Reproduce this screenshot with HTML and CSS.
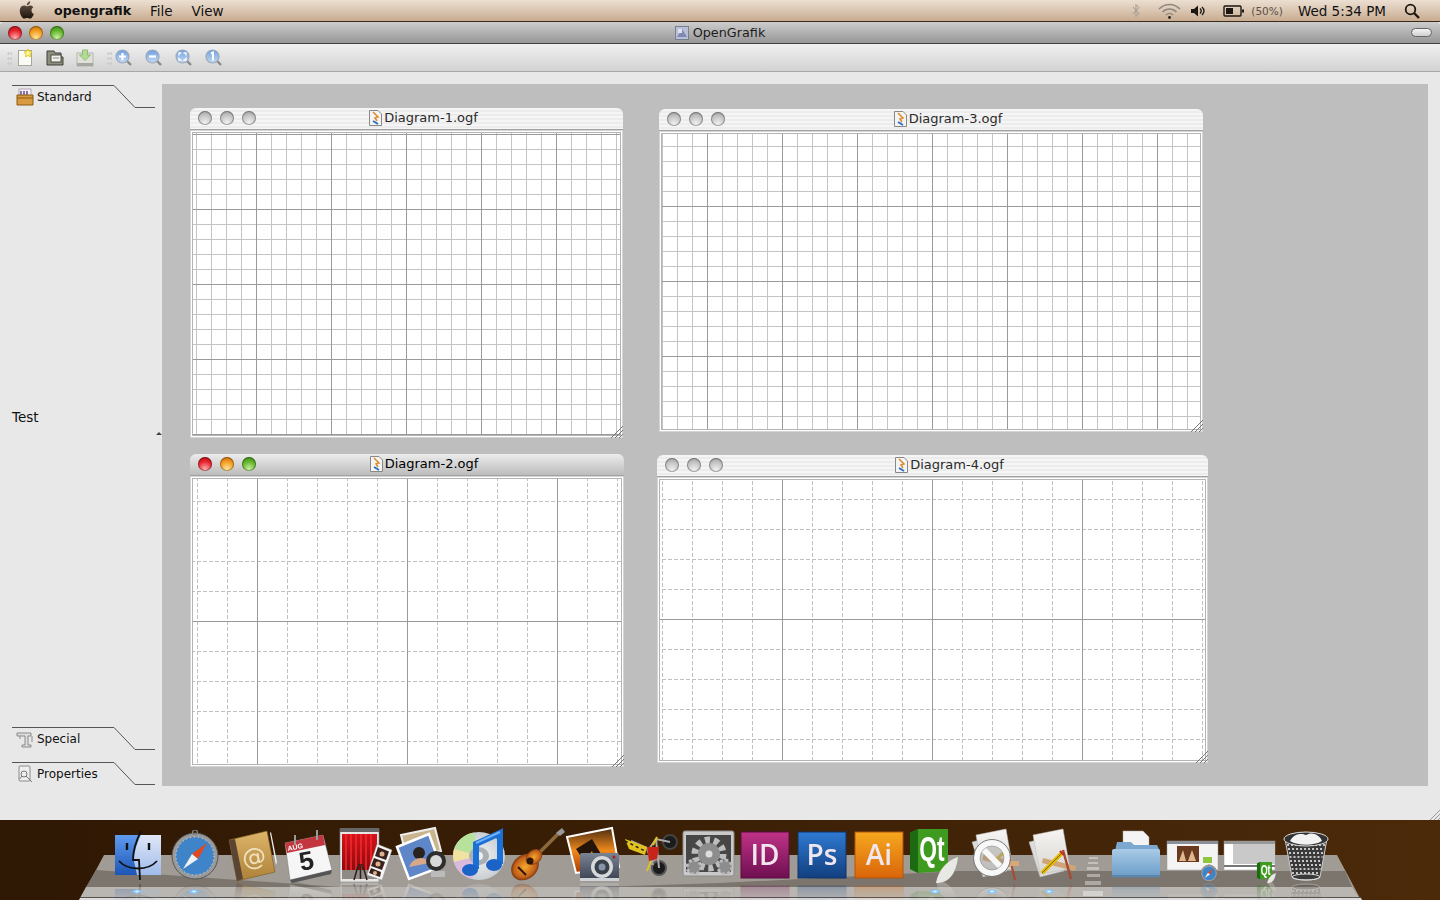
FILE: index.html
```html
<!DOCTYPE html>
<html lang="en">
  <head>
    <meta charset="UTF-8" />
    <title>OpenGrafik</title>
    <link rel="stylesheet" href="styles.css">
  </head>

  <body>
    <!-- Shared gradients and repeated drawings -->
    <svg class="defs" width="0" height="0">
      <defs>
        <linearGradient id="apple" x1="0" y1="0" x2="0" y2="1"><stop offset="0" stop-color="#6b5a4a"/><stop offset="1" stop-color="#1d130c"/></linearGradient>
        <linearGradient id="finderL" x1="0" y1="0" x2="0" y2="1"><stop offset="0" stop-color="#5f9cf0"/><stop offset="1" stop-color="#1c55b5"/></linearGradient>
        <linearGradient id="finderR" x1="0" y1="0" x2="0" y2="1"><stop offset="0" stop-color="#dfe7f6"/><stop offset="1" stop-color="#9fbbea"/></linearGradient>
        <linearGradient id="book" x1="0" y1="0" x2="0" y2="1"><stop offset="0" stop-color="#dcb46a"/><stop offset="1" stop-color="#ad8238"/></linearGradient>
        <linearGradient id="curtain" x1="0" y1="0" x2="0" y2="1"><stop offset="0" stop-color="#d81218"/><stop offset="1" stop-color="#8c0a0e"/></linearGradient>
        <linearGradient id="sunset" x1="0" y1="0" x2="0" y2="1"><stop offset="0" stop-color="#4b2a10"/><stop offset=".5" stop-color="#ee8a1c"/><stop offset="1" stop-color="#a83c08"/></linearGradient>
        <linearGradient id="cam" x1="0" y1="0" x2="0" y2="1"><stop offset="0" stop-color="#7b8494"/><stop offset="1" stop-color="#3c4352"/></linearGradient>
        <linearGradient id="indesign" x1="0" y1="0" x2="0" y2="1"><stop offset="0" stop-color="#bf3387"/><stop offset="1" stop-color="#6f0f50"/></linearGradient>
        <linearGradient id="photoshop" x1="0" y1="0" x2="0" y2="1"><stop offset="0" stop-color="#2f7ad2"/><stop offset="1" stop-color="#123f7f"/></linearGradient>
        <linearGradient id="illustrator" x1="0" y1="0" x2="0" y2="1"><stop offset="0" stop-color="#f6a81f"/><stop offset="1" stop-color="#d9650a"/></linearGradient>
        <linearGradient id="folder" x1="0" y1="0" x2="0" y2="1"><stop offset="0" stop-color="#a9cbe8"/><stop offset="1" stop-color="#6a9cc6"/></linearGradient>
        <linearGradient id="lens" x1="0" y1="0" x2="0" y2="1"><stop offset="0" stop-color="#6f9fe0"/><stop offset="1" stop-color="#c4daf4"/></linearGradient>
        <linearGradient id="page" x1="0" y1="0" x2="0" y2="1"><stop offset="0" stop-color="#f6f5f3"/><stop offset="1" stop-color="#d6d5d1"/></linearGradient>
        <radialGradient id="cd" cx=".5" cy=".5" r=".5"><stop offset="0" stop-color="#f2f4f6"/><stop offset="1" stop-color="#c9ced2"/></radialGradient>
        <radialGradient id="sunburst" cx=".5" cy=".5" r=".55"><stop offset="0" stop-color="#f2a82c"/><stop offset=".7" stop-color="#c4611a"/><stop offset="1" stop-color="#5e2a0a"/></radialGradient>
        <symbol id="safari" viewBox="0 0 50 50">
          <circle cx="25" cy="26" r="23" fill="#9a9a9a" stroke="#555"/>
          <circle cx="25" cy="26" r="19" fill="#3f83c9"/>
          <circle cx="25" cy="26" r="19" fill="none" stroke="#dfe9f3" stroke-width="1" stroke-dasharray="1 3"/>
          <path d="M37 13 L22 24 L28 29Z" fill="#e2491f"/>
          <path d="M13 39 L22 24 L28 29Z" fill="#f1f1f1"/>
          <circle cx="25" cy="2.500" r="2.500" fill="none" stroke="#888" stroke-width="1.200"/>
        </symbol>
        <symbol id="qt" viewBox="0 0 50 56">
          <path d="M2 4 L10 0 H40 V42 L10 44 L2 40Z" fill="#3f9a20"/>
          <path d="M2 4 L10 0 V44 L2 40Z" fill="#1c6a12"/>
          <text class="dock-qt" transform="translate(24 32) scale(.76 1.200)">Qt</text>
          <path d="M50 28 C38 32 30 42 28 54 C42 54 48 44 50 28Z" fill="#e8e8e4"/>
        </symbol>
        <symbol id="page-tools" viewBox="0 0 57 56">
          <path d="M7 15 L30 9 L42 44 L18 50Z" fill="#ddd" stroke="#aaa" stroke-width=".5"/>
          <path d="M11 8 L41 2 L48 42 L18 47Z" fill="url(#page)" stroke="#bbb" stroke-width=".5"/>
        </symbol>
      </defs>
    </svg>

    <!-- Menu bar -->
    <div class="menubar">
      <div class="menu-left">
        <svg class="apple" viewBox="0 0 24 24"><path fill="url(#apple)" d="M17.05 12.04c-.03-2.76 2.25-4.08 2.35-4.15-1.28-1.87-3.27-2.13-3.98-2.16-1.69-.17-3.3 1-4.16 1-.86 0-2.18-.97-3.59-.95-1.85.03-3.55 1.07-4.5 2.73-1.92 3.33-.49 8.26 1.38 10.96.91 1.32 2 2.81 3.43 2.75 1.38-.05 1.9-.89 3.56-.89 1.66 0 2.13.89 3.59.86 1.48-.02 2.42-1.35 3.33-2.67 1.05-1.53 1.48-3.02 1.5-3.09-.03-.01-2.88-1.1-2.91-4.39zM14.32 3.92c.76-.92 1.27-2.2 1.13-3.47-1.09.04-2.42.73-3.2 1.64-.7.81-1.32 2.12-1.15 3.37 1.22.09 2.46-.62 3.22-1.54z"/></svg>
        <span class="app-name">opengrafik</span>
        <span class="menu-item">File</span>
        <span class="menu-item">View</span>
      </div>
      <div class="menu-right">
        <svg class="status bt" width="8" height="15" viewBox="0 0 8 15"><path d="M1 4 L7 10.500 L4 13.500 V1.500 L7 4.500 L1 11" fill="none" stroke="#a39a90" stroke-width="1"/></svg>
        <svg class="status wifi" width="23" height="16" viewBox="0 0 23 16"><g fill="none" stroke="#8f8880" stroke-width="1.600"><path d="M1 6 C7 0 16 0 22 6"/><path d="M4.500 9 C8.500 5 14.500 5 18.500 9"/><path d="M8 12 C10 10 13 10 15 12"/></g><circle cx="11.500" cy="14.500" r="1.400" fill="#2b2118"/></svg>
        <svg class="status vol" width="15" height="12" viewBox="0 0 15 12"><path d="M0 4 H3 L7 0.500 V11.500 L3 8 H0Z" fill="#1d1712"/><path d="M9 3.500 C10.500 5 10.500 7 9 8.500 M11 2 C13.500 4.500 13.500 7.500 11 10" fill="none" stroke="#1d1712" stroke-width="1.300"/></svg>
        <svg class="status batt" width="22" height="12" viewBox="0 0 22 12"><rect x="1" y="1" width="17" height="10" rx="1" fill="none" stroke="#1d1712" stroke-width="1.400"/><rect x="3" y="3" width="7" height="6" fill="#1d1712"/><rect x="19" y="4.500" width="2" height="3" fill="#1d1712"/></svg>
        <span class="batt-pct">(50%)</span>
        <span class="clock">Wed 5:34 PM</span>
        <svg class="status search" width="16" height="16" viewBox="0 0 16 16"><circle cx="6.500" cy="6.500" r="4.800" fill="none" stroke="#1d1712" stroke-width="1.800"/><path d="M10 10 L15 15" stroke="#1d1712" stroke-width="2.400"/></svg>
      </div>
    </div>

    <!-- Application window -->
    <div class="titlebar">
      <div class="lights main-lights">
        <span class="light red"></span>
        <span class="light amber"></span>
        <span class="light green"></span>
      </div>
      <div class="app-title">
        <svg width="14" height="14" viewBox="0 0 14 14"><rect x=".5" y=".5" width="13" height="13" fill="#b9bfd6" stroke="#77808f"/><path d="M2 11 L7 3 L12 11Z" fill="#7f88b0"/><rect x="3" y="3" width="4" height="4" fill="#dfe3f0"/></svg>
        <span>OpenGrafik</span>
      </div>
      <span class="pill"></span>
    </div>

    <div class="toolbar">
      <span class="handle"></span>
      <span class="tool handle-after">
        <svg width="20" height="20" viewBox="0 0 20 20"><rect x="3.500" y="2.500" width="13" height="15" fill="#fbfbf6" stroke="#a8a89a"/><path d="M13 1 L14.200 3.600 L17 4 L15 6 L15.500 8.800 L13 7.500 L10.500 8.800 L11 6 L9 4 L11.800 3.600Z" fill="#fff6a0" stroke="#e8cc10"/></svg>
      </span>
      <span class="tool">
        <svg width="18" height="18" viewBox="0 0 18 18"><path d="M1 2 H8 L9 4 H15 V8 H17 V16 H1Z" fill="#8b8f7c" stroke="#3f4238"/><rect x="5" y="6" width="10" height="7" fill="#f2f2ec" stroke="#4a4d42"/><path d="M7 9 H13" stroke="#888"/></svg>
      </span>
      <span class="tool">
        <svg width="18" height="18" viewBox="0 0 18 18"><rect x="1" y="4" width="16" height="13" fill="#e0e2da" stroke="#b4b8b0"/><rect x="1" y="14" width="16" height="3" fill="#a4a7a0"/><path d="M6.500 1 H11.500 V6 H14.500 L9 11.500 L3.500 6 H6.500Z" fill="#b4da98" stroke="#92be74"/></svg>
      </span>
      <span class="handle second"></span>
      <span class="tool">
        <svg class="mag" viewBox="0 0 18 18"><path d="M11.500 11.500 L16 16" stroke="#8a8a8a" stroke-width="2.400"/><circle cx="7.500" cy="7.500" r="6.500" fill="url(#lens)" stroke="#9aa8ba" stroke-width="1.200"/><path d="M7.500 4 V11 M4 7.500 H11" stroke="#fff" stroke-width="2.200"/></svg>
      </span>
      <span class="tool">
        <svg class="mag" viewBox="0 0 18 18"><path d="M11.500 11.500 L16 16" stroke="#8a8a8a" stroke-width="2.400"/><circle cx="7.500" cy="7.500" r="6.500" fill="url(#lens)" stroke="#9aa8ba" stroke-width="1.200"/><path d="M4 7.500 H11" stroke="#fff" stroke-width="2.200"/></svg>
      </span>
      <span class="tool">
        <svg class="mag" viewBox="0 0 18 18"><path d="M11.500 11.500 L16 16" stroke="#8a8a8a" stroke-width="2.400"/><circle cx="7.500" cy="7.500" r="6.500" fill="url(#lens)" stroke="#9aa8ba" stroke-width="1.200"/><path d="M4 6.500 V4 H6.500 M8.500 4 H11 V6.500 M11 8.500 V11 H8.500 M6.500 11 H4 V8.500" fill="none" stroke="#fff" stroke-width="1.300"/></svg>
      </span>
      <span class="tool">
        <svg class="mag" viewBox="0 0 18 18"><path d="M11.500 11.500 L16 16" stroke="#8a8a8a" stroke-width="2.400"/><circle cx="7.500" cy="7.500" r="6.500" fill="url(#lens)" stroke="#9aa8ba" stroke-width="1.200"/><path d="M6 4.500 L8 3.500 V11.500" fill="none" stroke="#fff" stroke-width="2"/></svg>
      </span>
    </div>

    <div class="workspace">
      <!-- Stencil tabs -->
      <aside class="sidebar">
        <div class="tab">
          <svg class="tab-line" width="144" height="24" viewBox="0 0 144 24"><path d="M0 .5 H102 L123 22.500 H143" fill="none" stroke="#555"/></svg>
          <svg class="tab-icon" width="18" height="18" viewBox="0 0 18 18"><rect x="3" y="1" width="12" height="8" fill="#f4f0f6" stroke="#8a7a9a" stroke-width=".6"/><path d="M5 3 V8 M8 3 V8 M11 3 V8" stroke="#5a3f88" stroke-width="1.400"/><path d="M1 7 H17 V17 H1Z" fill="#d99a3f" stroke="#8a5a14"/><path d="M1 10 H17" stroke="#8a5a14"/></svg>
          <span>Standard</span>
        </div>
        <div class="test-row">
          <span>Test</span>
          <span class="caret"></span>
        </div>
        <div class="tab special">
          <svg class="tab-line" width="144" height="24" viewBox="0 0 144 24"><path d="M0 .5 H102 L123 22.500 H143" fill="none" stroke="#555"/></svg>
          <svg class="tab-icon" width="18" height="18" viewBox="0 0 18 18"><path d="M1 3 H15 V6 H12 V15 H15 V17 H6 V15 H9 V6 H1Z" fill="#dcdcdc" stroke="#8b8b8b"/><path d="M4 6 V9 M16 6 V12" stroke="#8b8b8b"/></svg>
          <span>Special</span>
        </div>
        <div class="tab">
          <svg class="tab-line" width="144" height="24" viewBox="0 0 144 24"><path d="M0 .5 H102 L123 22.500 H143" fill="none" stroke="#555"/></svg>
          <svg class="tab-icon" width="18" height="18" viewBox="0 0 18 18"><rect x="3" y="1" width="11" height="15" rx="1" fill="#eee" stroke="#8b8b8b"/><circle cx="8" cy="9" r="3" fill="none" stroke="#777"/><path d="M6 11 L3.500 14 M10 11 L16 17" stroke="#777"/></svg>
          <span>Properties</span>
        </div>
      </aside>

      <main class="mdi">
        <section class="win win-1">
          <header class="win-title">
            <div class="lights">
              <span class="light off"></span>
              <span class="light off"></span>
              <span class="light off"></span>
            </div>
            <div class="win-name">
              <svg class="doc-icon" width="13" height="16" viewBox="0 0 13 16"><path d="M.5 .5 H9 L12.500 4 V15.500 H.5Z" fill="#f4f4f4" stroke="#888"/><path d="M4 2 L9 7 L6 8 L8 11" fill="none" stroke="#e08a2a" stroke-width="1.500"/><path d="M4 11 L9 14" stroke="#2f6fc0" stroke-width="2"/></svg>
              <span>Diagram-1.ogf</span>
            </div>
          </header>
          <div class="win-body">
            <svg class="grid" width="100%" height="100%">
              <defs>
                <pattern id="grid-1" width="75" height="75" x="63" y="1" patternUnits="userSpaceOnUse">
                  <path class="minor" d="M15.500 0 V75 M30.500 0 V75 M45.500 0 V75 M60.500 0 V75 M0 15.500 H75 M0 30.500 H75 M0 45.500 H75 M0 60.500 H75"/>
                  <path class="major" d="M.5 0 V75 M0 .5 H75"/>
                </pattern>
              </defs>
              <rect width="100%" height="100%" fill="url(#grid-1)"/>
            </svg>
            <svg class="grip" width="12" height="12" viewBox="0 0 12 12"><path d="M0 12 L12 0 M4 12 L12 4 M8 12 L12 8" stroke="#777"/></svg>
          </div>
        </section>

        <section class="win win-3">
          <header class="win-title">
            <div class="lights">
              <span class="light off"></span>
              <span class="light off"></span>
              <span class="light off"></span>
            </div>
            <div class="win-name">
              <svg class="doc-icon" width="13" height="16" viewBox="0 0 13 16"><path d="M.5 .5 H9 L12.500 4 V15.500 H.5Z" fill="#f4f4f4" stroke="#888"/><path d="M4 2 L9 7 L6 8 L8 11" fill="none" stroke="#e08a2a" stroke-width="1.500"/><path d="M4 11 L9 14" stroke="#2f6fc0" stroke-width="2"/></svg>
              <span>Diagram-3.ogf</span>
            </div>
          </header>
          <div class="win-body">
            <svg class="grid" width="100%" height="100%">
              <defs>
                <pattern id="grid-3" width="75" height="75" x="45" y="72" patternUnits="userSpaceOnUse">
                  <path class="minor" d="M15.500 0 V75 M30.500 0 V75 M45.500 0 V75 M60.500 0 V75 M0 15.500 H75 M0 30.500 H75 M0 45.500 H75 M0 60.500 H75"/>
                  <path class="major" d="M.5 0 V75 M0 .5 H75"/>
                </pattern>
              </defs>
              <rect width="100%" height="100%" fill="url(#grid-3)"/>
            </svg>
            <svg class="grip" width="12" height="12" viewBox="0 0 12 12"><path d="M0 12 L12 0 M4 12 L12 4 M8 12 L12 8" stroke="#777"/></svg>
          </div>
        </section>

        <section class="win win-2 active">
          <header class="win-title">
            <div class="lights">
              <span class="light red"></span>
              <span class="light amber"></span>
              <span class="light green"></span>
            </div>
            <div class="win-name">
              <svg class="doc-icon" width="13" height="16" viewBox="0 0 13 16"><path d="M.5 .5 H9 L12.500 4 V15.500 H.5Z" fill="#f4f4f4" stroke="#888"/><path d="M4 2 L9 7 L6 8 L8 11" fill="none" stroke="#e08a2a" stroke-width="1.500"/><path d="M4 11 L9 14" stroke="#2f6fc0" stroke-width="2"/></svg>
              <span>Diagram-2.ogf</span>
            </div>
          </header>
          <div class="win-body">
            <svg class="grid" width="100%" height="100%">
              <defs>
                <pattern id="grid-2" width="150" height="150" x="64" y="142" patternUnits="userSpaceOnUse">
                  <path class="dashed" d="M30.500 0 V150 M60.500 0 V150 M90.500 0 V150 M120.500 0 V150 M0 30.500 H150 M0 60.500 H150 M0 90.500 H150 M0 120.500 H150"/>
                  <path class="major" d="M.5 0 V150 M0 .5 H150"/>
                </pattern>
              </defs>
              <rect width="100%" height="100%" fill="url(#grid-2)"/>
            </svg>
            <svg class="grip" width="12" height="12" viewBox="0 0 12 12"><path d="M0 12 L12 0 M4 12 L12 4 M8 12 L12 8" stroke="#777"/></svg>
          </div>
        </section>

        <section class="win win-4">
          <header class="win-title">
            <div class="lights">
              <span class="light off"></span>
              <span class="light off"></span>
              <span class="light off"></span>
            </div>
            <div class="win-name">
              <svg class="doc-icon" width="13" height="16" viewBox="0 0 13 16"><path d="M.5 .5 H9 L12.500 4 V15.500 H.5Z" fill="#f4f4f4" stroke="#888"/><path d="M4 2 L9 7 L6 8 L8 11" fill="none" stroke="#e08a2a" stroke-width="1.500"/><path d="M4 11 L9 14" stroke="#2f6fc0" stroke-width="2"/></svg>
              <span>Diagram-4.ogf</span>
            </div>
          </header>
          <div class="win-body">
            <svg class="grid" width="100%" height="100%">
              <defs>
                <pattern id="grid-4" width="150" height="150" x="122" y="139" patternUnits="userSpaceOnUse">
                  <path class="dashed" d="M30.500 0 V150 M60.500 0 V150 M90.500 0 V150 M120.500 0 V150 M0 30.500 H150 M0 60.500 H150 M0 90.500 H150 M0 120.500 H150"/>
                  <path class="major" d="M.5 0 V150 M0 .5 H150"/>
                </pattern>
              </defs>
              <rect width="100%" height="100%" fill="url(#grid-4)"/>
            </svg>
            <svg class="grip" width="12" height="12" viewBox="0 0 12 12"><path d="M0 12 L12 0 M4 12 L12 4 M8 12 L12 8" stroke="#777"/></svg>
          </div>
        </section>
      </main>

      <svg class="main-grip" width="10" height="10" viewBox="0 0 10 10"><path d="M0 10 L10 0 M4 10 L10 4 M8 10 L10 8" stroke="#999"/></svg>
    </div>

    <!-- Dock -->
    <footer class="dock">
      <svg class="shelf" width="1440" height="80" viewBox="0 0 1440 80">
        <polygon points="104,35 1337,35 1361,80 80,80" fill="#a09b94"/>
        <polygon points="96,50 340,67 600,67 720,63 960,51 1345,51 1352,67 86,67" fill="#7c756d"/>
        <polygon points="86,67 1352,67 1359,78 80,78" fill="#b9b6b1"/>
        <rect x="80" y="77" width="1281" height="1" fill="#56524d"/>
        <polygon points="80,78 1361,78 1362,80 79,80" fill="#dcdcdc"/>
      </svg>
      <div class="dock-items">
        <div class="dock-item"><svg viewBox="0 0 57 56"><rect x="5" y="8" width="46" height="40" fill="url(#finderR)"/><path d="M5 8 H31 C26 18 24 26 24 34 L27 48 H5Z" fill="url(#finderL)"/><path d="M31 4 C25 16 23 26 23 33 H29 L30 53 M9 34 C18 44 38 44 47 34" fill="none" stroke="#111" stroke-width="1.800"/><path d="M17 16 V23 M39 16 V23" stroke="#111" stroke-width="2.400"/></svg></div>
        <div class="dock-item"><svg viewBox="0 0 57 56"><use href="#safari" x="3" y="3" width="50" height="50"/></svg></div>
        <div class="dock-item"><svg viewBox="0 0 57 56"><path d="M5 13 L43 4 L51 45 L13 54Z" fill="url(#book)" stroke="#7a5a20" stroke-width=".6"/><path d="M5 13 L11 12 L19 52 L13 54Z" fill="#5a4434"/><text x="30" y="38" class="dock-at" transform="rotate(-11 30 30)">@</text><path d="M46 6 L47 5 L53 35 L52 38Z" fill="#eee"/></svg></div>
        <div class="dock-item"><svg viewBox="0 0 57 56"><path d="M4 16 L42 8 L51 43 L9 53Z" fill="#f6f6f6" stroke="#777" stroke-width=".5"/><path d="M4 16 L42 8 L44 18 L6 26Z" fill="#c33640"/><text x="7" y="24" class="dock-aug" transform="rotate(-11 7 24)">AUG</text><text x="20" y="44" class="dock-day" transform="rotate(-11 20 44)">5</text><path d="M14 8 V18 M36 3 V13" stroke="#9a9a9a" stroke-width="2"/><path d="M9 53 L51 43 L50 47 L11 56Z" fill="#555"/></svg></div>
        <div class="dock-item"><svg viewBox="0 0 57 56"><rect x="2" y="2" width="39" height="53" fill="#e6e6e6" stroke="#888" stroke-width=".6"/><rect x="2" y="1" width="39" height="4" fill="#666"/><rect x="4" y="7" width="35" height="36" fill="url(#curtain)"/><path d="M8 7 V43 M13 7 V43 M18 7 V43 M23 7 V43 M28 7 V43 M33 7 V43" stroke="#ee2a30" stroke-width="1.600"/><rect x="4" y="43" width="35" height="9" fill="#8f8a86"/><path d="M20 38 H25 M20 39 L16 53 M25 39 L29 53 M22.500 39 V52" stroke="#2e211c" stroke-width="1.500"/><path d="M39 17 L54 23 L44 53 L29 48Z" fill="#f5f5f5" stroke="#999" stroke-width=".4"/><path d="M40 20 L51 24.500 L48 33 L37 29Z M36 31 L47 35 L44 43 L33 39Z M33 41 L43 45 L42 50 L31 46Z" fill="#3a221c"/><circle cx="44" cy="27" r="2.500" fill="#dcae92"/><circle cx="40" cy="37" r="2.500" fill="#dcae92"/><circle cx="37" cy="46" r="2" fill="#dcae92"/></svg></div>
        <div class="dock-item"><svg viewBox="0 0 57 56"><path d="M6 8 L40 1 L46 24 L12 32Z" fill="#c9b68e" stroke="#eee" stroke-width="2"/><path d="M2 20 L34 7 L46 40 L14 52Z" fill="#5f86c8" stroke="#fff" stroke-width="2.500"/><circle cx="24" cy="26" r="6" fill="#2a2320"/><path d="M14 40 C18 30 30 28 34 36Z" fill="#d8a888"/><circle cx="41" cy="34" r="10" fill="#2d2d2d"/><circle cx="41" cy="34" r="6" fill="#d8d8d8"/><path d="M36 44 H50 V50 H36Z" fill="#bbb"/></svg></div>
        <div class="dock-item"><svg viewBox="0 0 57 56"><ellipse cx="27" cy="29" rx="26" ry="24" fill="url(#cd)"/><path d="M27 29 L2 22 A26 24 0 0 1 22 5.500Z" fill="#b8e29c"/><path d="M27 29 L2 22 A26 24 0 0 0 2 35Z" fill="#f0e2a0"/><path d="M27 29 L2 35 A26 24 0 0 0 20 52Z" fill="#d9b9dc"/><ellipse cx="27" cy="29" rx="10" ry="9" fill="#aab0b4"/><ellipse cx="27" cy="29" rx="4" ry="4" fill="#eef0f2"/><path d="M24 42 V17 L48 6 V37" fill="none" stroke="#1b6fd8" stroke-width="6"/><path d="M24 16 L48 5" stroke="#6fb2f4" stroke-width="2"/><ellipse cx="18" cy="43" rx="8" ry="6" fill="#1c63c8"/><ellipse cx="42" cy="38" rx="8" ry="6" fill="#1c63c8"/></svg></div>
        <div class="dock-item"><svg viewBox="0 0 57 56"><path d="M26 30 L52 4" stroke="#8a6a3c" stroke-width="3.500"/><path d="M47 6 L53 1 L56 5 L51 9Z" fill="#999"/><ellipse cx="16" cy="40" rx="15" ry="12" fill="url(#sunburst)" transform="rotate(-40 16 40)"/><ellipse cx="25" cy="30" rx="9" ry="7" fill="url(#sunburst)" transform="rotate(-40 25 30)"/><circle cx="21" cy="34" r="3.500" fill="#2c1708"/><path d="M9 40 L17 48" stroke="#311" stroke-width="2"/></svg></div>
        <div class="dock-item"><svg viewBox="0 0 57 56"><path d="M1 10 L46 1 L53 40 L10 46Z" fill="url(#sunset)" stroke="#fff" stroke-width="2"/><path d="M10 22 L26 12 L38 32 L30 34 L26 24 L18 34Z" fill="#25140a"/><rect x="14" y="26" width="39" height="27" rx="2" fill="url(#cam)"/><rect x="14" y="51" width="39" height="3" fill="#cfd3d8"/><circle cx="36" cy="40" r="11" fill="#d6d8dc"/><circle cx="36" cy="40" r="7.500" fill="#3a4048"/><circle cx="36" cy="40" r="3.500" fill="#8793a6"/><circle cx="48" cy="30" r="1.500" fill="#a22"/></svg></div>
        <div class="dock-item"><svg viewBox="0 0 57 56"><circle cx="47" cy="15" r="7" fill="#1b1b1b" stroke="#444" stroke-width="2"/><circle cx="36" cy="41" r="7" fill="#1b1b1b" stroke="#555" stroke-width="2"/><path d="M8 14 L26 22 L33 12 L47 15 M33 12 L36 41 M24 22 L30 38" fill="none" stroke="#aaa" stroke-width="2"/><path d="M2 12 L24 20 L22 28 L6 22Z" fill="#e3c21c"/><path d="M2 14 L22 24" stroke="#222" stroke-width="1.500" stroke-dasharray="3 3"/><path d="M24 20 L36 20 L34 32 L26 34Z" fill="#c8241a"/><path d="M30 18 L34 10 M28 34 L24 44" stroke="#e3c21c" stroke-width="2"/></svg></div>
        <div class="dock-item"><svg viewBox="0 0 57 56"><rect x="3" y="4" width="51" height="45" rx="2" fill="#c9c9c9" stroke="#8a8a8a"/><rect x="6" y="8" width="45" height="37" fill="#464646"/><circle cx="29" cy="27" r="14" fill="none" stroke="#bdbdbd" stroke-width="7" stroke-dasharray="5 3.790"/><circle cx="29" cy="27" r="11" fill="#8d8d8d"/><circle cx="29" cy="27" r="3.500" fill="#ddd"/><circle cx="14" cy="40" r="7" fill="#8d8d8d" stroke="#bdbdbd" stroke-width="3" stroke-dasharray="3 2.500"/><circle cx="45" cy="40" r="7" fill="#8d8d8d" stroke="#bdbdbd" stroke-width="3" stroke-dasharray="3 2.500"/></svg></div>
        <div class="dock-item"><svg viewBox="0 0 57 56"><rect x="4" y="5" width="48" height="46" fill="url(#indesign)" stroke="#5a0c40"/><text x="28" y="38" class="dock-adobe">ID</text></svg></div>
        <div class="dock-item"><svg viewBox="0 0 57 56"><rect x="4" y="5" width="48" height="46" fill="url(#photoshop)" stroke="#0e3468"/><text x="28" y="38" class="dock-adobe">Ps</text></svg></div>
        <div class="dock-item"><svg viewBox="0 0 57 56"><rect x="4" y="5" width="48" height="46" fill="url(#illustrator)" stroke="#b35408"/><text x="28" y="38" class="dock-adobe">Ai</text></svg></div>
        <div class="dock-item"><svg viewBox="0 0 57 56"><use href="#qt" x="0" y="2" width="50" height="56"/></svg></div>
        <div class="dock-item"><svg viewBox="0 0 57 56"><use href="#page-tools" width="57" height="56"/><path d="M18 30 L46 37" stroke="#c9a070" stroke-width="6"/><path d="M30 34 L42 22" stroke="#d9b020" stroke-width="3"/><path d="M44 28 L50 53" stroke="#a8482c" stroke-width="2"/><rect x="44" y="34" width="10" height="5" fill="#d7a878"/><circle cx="27" cy="31" r="15" fill="rgba(150,150,150,.4)" stroke="#f8f8f8" stroke-width="6"/><path d="M16 20 L38 42" stroke="#f8f8f8" stroke-width="6"/><circle cx="27" cy="31" r="18.500" fill="none" stroke="#7c7c7c"/><circle cx="27" cy="31" r="12" fill="none" stroke="#8c8c8c" stroke-width=".6"/></svg></div>
        <div class="dock-item"><svg viewBox="0 0 57 56"><use href="#page-tools" width="57" height="56"/><path d="M21 31 L54 39 L53 44 L20 36Z" fill="#cfa578"/><path d="M41 23 L49 52" stroke="#a8482c" stroke-width="2.400"/><path d="M20 46 L40 26" stroke="#e6b800" stroke-width="4"/><path d="M20 46 L40 26" stroke="#333" stroke-width=".6"/><path d="M38 24 L42 28" stroke="#c03020" stroke-width="2"/></svg></div>
        <div class="dock-sep"><span></span><span></span><span></span><span></span><span></span><span></span></div>
        <div class="dock-item"><svg viewBox="0 0 57 56"><path d="M16 4 H36 L42 10 V22 H16Z" fill="#f4f4f4" stroke="#aaa" stroke-width=".5"/><path d="M8 24 L10 15 H24 L27 18 H50 L53 24Z" fill="#7ca8cf"/><rect x="5" y="22" width="48" height="28" rx="2" fill="url(#folder)"/><rect x="5" y="48" width="48" height="2.500" fill="#5b86aa"/></svg></div>
        <div class="dock-item"><svg viewBox="0 0 57 56"><rect x="3" y="14" width="51" height="29" fill="#f4f4f4" stroke="#999" stroke-width=".5"/><rect x="3" y="14" width="51" height="3" fill="#8a8f9a"/><rect x="13" y="19" width="22" height="16" fill="#6b3a1e"/><path d="M15 34 L19 23 L22 34 M24 34 L28 23 L32 34" fill="#e0b890"/><rect x="39" y="30" width="9" height="6" fill="#8ec63f"/><use href="#safari" x="36" y="37" width="18" height="18"/></svg></div>
        <div class="dock-item"><svg viewBox="0 0 57 56"><rect x="3" y="14" width="51" height="29" fill="#fff" stroke="#999" stroke-width=".5"/><rect x="3" y="14" width="51" height="3" fill="#999"/><rect x="12" y="17" width="42" height="20" fill="#c9c9c9"/><rect x="3" y="38" width="51" height="2" fill="#777"/><use href="#qt" x="35" y="35" width="20" height="22"/></svg></div>
        <div class="dock-item"><svg viewBox="0 0 57 56"><path d="M7 12 L14 50 C18 54 38 54 42 50 L49 12Z" fill="#3a3a3a"/><path d="M7 12 L14 50 C18 54 38 54 42 50 L49 12Z" fill="none" stroke="#cfcfcf" stroke-width="1"/><path d="M9 18 L47 18 M10 22 L46 22 M11 26 L45 26 M11.500 30 L44.500 30 M12 34 L44 34 M13 38 L43 38 M13.500 42 L42.500 42 M14 46 L42 46" stroke="#c6c6c6" stroke-width="1.800" stroke-dasharray="2 2"/><ellipse cx="28" cy="12" rx="22" ry="7" fill="#333" stroke="#ddd"/><path d="M12 14 C16 6 24 6 28 8 C34 4 42 8 44 14 C36 19 20 19 12 14Z" fill="#f2f2f2"/><ellipse cx="28" cy="50" rx="14" ry="3" fill="none" stroke="#dcdcdc"/></svg></div>
      </div>
      <div class="dots">
        <span class="dot dot-finder"></span>
        <span class="dot dot-safari"></span>
        <span class="dot dot-qt"></span>
        <span class="dot dot-a"></span>
        <span class="dot dot-b"></span>
      </div>
    </footer>
  </body>
</html>
```

FILE: styles.css
```css
/* Global Styles */
html,
body {
  margin: 0;
  padding: 0;
  height: 100%;
}

body {
  width: 1440px;
  height: 900px;
  overflow: hidden;
  display: flex;
  flex-direction: column;
  background-color: #e8e8e8;
  font-family: "DejaVu Sans", sans-serif;
  color: #111;
}

.defs {
  position: absolute;
  width: 0;
  height: 0;
}

/* Menu Bar */
.menubar {
  height: 21px;
  flex: none;
  display: flex;
  justify-content: space-between;
  align-items: center;
  background: linear-gradient(#ecdfd1, #dac6b2 50%, #c8ab90);
  border-bottom: 1px solid #3b2a1a;
  font-size: 13.5px;
}

.menu-left {
  display: flex;
  align-items: center;
  padding-left: 18px;
}

.apple {
  width: 19px;
  height: 19px;
  margin-right: 17px;
}

.app-name {
  font-weight: bold;
  font-size: 12.7px;
  width: 77px;
  margin-right: 19px;
}

.menu-item {
  margin-right: 19px;
}

.menu-right {
  display: flex;
  align-items: center;
  padding-right: 20px;
}

.status {
  flex: none;
}

.bt {
  margin-right: 18px;
}

.wifi {
  margin-right: 10px;
}

.vol {
  margin-right: 17px;
}

.batt {
  margin-right: 6px;
}

.batt-pct {
  font-size: 10.5px;
  color: #5a5048;
  margin-right: 15px;
}

.clock {
  margin-right: 18px;
}

/* Application Title Bar */
.titlebar {
  height: 21px;
  flex: none;
  display: grid;
  grid-template-columns: 1fr auto 1fr;
  align-items: center;
  background: linear-gradient(#cdcdcd, #969696);
  border-bottom: 1px solid #3f3f3f;
  border-radius: 4px 4px 0 0;
}

.lights {
  display: flex;
  gap: 8px;
}

.main-lights {
  gap: 7px;
  padding-left: 8px;
}

.light {
  width: 14px;
  height: 14px;
  border-radius: 50%;
  box-shadow: inset 0 0 0 1px rgba(0, 0, 0, 0.3);
}

.light.red {
  background: radial-gradient(circle at 50% 85%, #ffb0b0, #e5222c 55%, #a00a14);
}

.light.amber {
  background: radial-gradient(circle at 50% 85%, #ffe69a, #f29a1e 55%, #b05f0a);
}

.light.green {
  background: radial-gradient(circle at 50% 85%, #c8f2a0, #62b32a 55%, #2f7a10);
}

.light.off {
  background: radial-gradient(circle at 50% 85%, #f2f2f2, #c4c4c4 55%, #8f8f8f);
}

.app-title {
  display: flex;
  align-items: center;
  gap: 4px;
  font-size: 12.8px;
  color: #1c1c1c;
}

.pill {
  justify-self: end;
  width: 19px;
  height: 7px;
  margin-right: 8px;
  border: 1px solid #666;
  border-radius: 5px;
  background: linear-gradient(#f4f4f4, #cfcfcf);
}

/* Toolbar */
.toolbar {
  height: 27px;
  flex: none;
  display: flex;
  align-items: center;
  padding-left: 7px;
  background: linear-gradient(#f0f0f0, #d2d2d2);
  border-bottom: 1px solid #a8a8a8;
}

.handle {
  width: 5px;
  height: 14px;
  margin-right: -2px;
  background-image: radial-gradient(circle, #cdcdcd 1px, transparent 1.5px);
  background-size: 3px 5px;
}

.handle.second {
  margin-left: 7px;
  margin-right: -3px;
}

.tool {
  width: 30px;
  height: 20px;
  display: flex;
  justify-content: center;
  align-items: center;
}

.mag {
  width: 18px;
  height: 18px;
}

/* Workspace */
.workspace {
  flex: 1;
  position: relative;
  display: flex;
  min-height: 0;
}

.main-grip {
  position: absolute;
  right: 0;
  bottom: 0;
}

/* Sidebar */
.sidebar {
  width: 150px;
  flex: none;
  display: flex;
  flex-direction: column;
  padding: 13px 0 34px 12px;
  font-size: 12px;
}

.tab {
  position: relative;
  width: 144px;
  height: 24px;
  flex: none;
  display: flex;
  align-items: center;
  gap: 3px;
  padding-left: 4px;
  box-sizing: border-box;
}

.tab-line {
  position: absolute;
  left: 0;
  top: 0;
}

.tab + .tab {
  margin-top: 11px;
}

.test-row {
  height: 28px;
  margin-top: 300px;
  display: flex;
  justify-content: space-between;
  font-size: 13.5px;
}

.caret {
  align-self: flex-end;
  width: 0;
  height: 0;
  margin-bottom: 2px;
  border-left: 3px solid transparent;
  border-right: 3px solid transparent;
  border-bottom: 3px solid #444;
}

.special {
  margin-top: auto;
}

/* MDI Area */
.mdi {
  position: relative;
  flex: 1;
  margin: 12px 12px 34px 0;
  background-color: #bebebe;
}

.win {
  position: absolute;
  display: flex;
  flex-direction: column;
}

.win-1 {
  left: 28px;
  top: 24px;
  width: 433px;
  height: 330px;
}

.win-3 {
  left: 497px;
  top: 25px;
  width: 544px;
  height: 323px;
}

.win-2 {
  left: 28px;
  top: 370px;
  width: 434px;
  height: 313px;
}

.win-4 {
  left: 495px;
  top: 371px;
  width: 551px;
  height: 308px;
}

.win-title {
  height: 19px;
  flex: none;
  display: flex;
  align-items: center;
  padding: 0 0 2px 8px;
  border-radius: 6px 6px 0 0;
  border-bottom: 1px solid #a2a2a2;
  background: repeating-linear-gradient(#f5f5f5 0, #f5f5f5 2px, #ececec 2px, #ececec 4px);
}

.active .win-title {
  background: linear-gradient(#ececec, #bcbcbc);
}

.win-title .lights {
  width: 58px;
  flex: none;
}

.win-name {
  flex: 1;
  display: flex;
  justify-content: center;
  align-items: center;
  gap: 2px;
  padding-right: 32px;
  font-size: 13px;
  color: #2a2a2a;
}

.active .win-name {
  color: #000;
}

.win-body {
  position: relative;
  flex: 1;
  min-height: 0;
  padding: 1px;
  background-color: #fff;
  border: 1px solid #d4d4d4;
}

.grid {
  display: block;
  box-sizing: border-box;
  border: 1px solid #b4b4b4;
  background-color: #fff;
}

.minor {
  fill: none;
  stroke: #c4c4c4;
}

.dashed {
  fill: none;
  stroke: #c0c0c0;
  stroke-dasharray: 4 2;
}

.major {
  fill: none;
  stroke: #9a9a9a;
}

.grip {
  position: absolute;
  right: -1px;
  bottom: -1px;
}

/* Dock */
.dock {
  position: relative;
  height: 80px;
  flex: none;
  overflow: hidden;
  background: linear-gradient(90deg, #2f1804, #3c2006 50%, #4b2a0a);
}

.shelf {
  position: absolute;
  left: 0;
  top: 0;
}

.dock-items {
  position: relative;
  display: flex;
  padding: 7px 0 0 110px;
}

.dock-item {
  width: 57px;
  height: 56px;
  flex: none;
  -webkit-box-reflect: below -2px linear-gradient(transparent 62%, rgba(255, 255, 255, 0.35));
}

.dock-item svg {
  display: block;
  width: 57px;
  height: 56px;
  overflow: visible;
}

.dock-sep {
  width: 28px;
  flex: none;
  display: flex;
  flex-direction: column;
  align-items: center;
  padding-top: 30px;
}

.dock-sep span {
  background-color: rgba(255, 255, 255, 0.38);
  margin-bottom: 3px;
}

.dock-sep span:nth-child(1) {
  width: 9px;
  height: 2px;
}

.dock-sep span:nth-child(2) {
  width: 10px;
  height: 2px;
}

.dock-sep span:nth-child(3) {
  width: 12px;
  height: 3px;
  margin-bottom: 4px;
}

.dock-sep span:nth-child(4) {
  width: 13px;
  height: 3px;
  margin-bottom: 4px;
}

.dock-sep span:nth-child(5) {
  width: 16px;
  height: 4px;
  margin-bottom: 6px;
}

.dock-sep span:nth-child(6) {
  width: 20px;
  height: 5px;
}

.dock-at {
  font-family: "DejaVu Sans", sans-serif;
  font-size: 24px;
  fill: #f0e2c0;
  text-anchor: middle;
}

.dock-aug {
  font-family: "Liberation Sans", sans-serif;
  font-weight: bold;
  font-size: 7px;
  fill: #fff;
}

.dock-day {
  font-family: "Liberation Sans", sans-serif;
  font-weight: bold;
  font-size: 26px;
  fill: #222;
}

.dock-adobe {
  font-family: "Open Sans", sans-serif;
  font-weight: 600;
  font-size: 28px;
  fill: #f0e6ee;
  text-anchor: middle;
}

.dock-qt {
  font-family: "Liberation Sans", sans-serif;
  font-weight: bold;
  font-size: 30px;
  fill: #fff;
  text-anchor: middle;
}

.dot {
  position: absolute;
  top: 69px;
  width: 12px;
  height: 5px;
  border-radius: 50%;
  background: radial-gradient(closest-side, #fff, #7fc4ff 55%, rgba(90, 170, 255, 0));
}

.dot-finder {
  left: 131px;
}

.dot-safari {
  left: 188px;
}

.dot-qt {
  left: 929px;
}

.dot-a {
  left: 986px;
}

.dot-b {
  left: 1043px;
}
```
